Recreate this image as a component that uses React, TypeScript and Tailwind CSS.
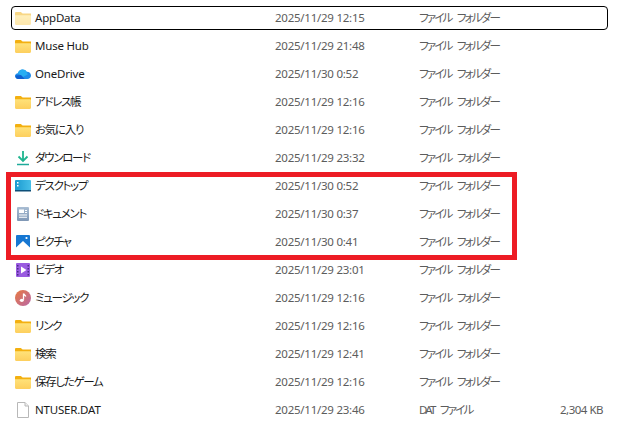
import React from "react";

const Folder = ({ faded }: { faded?: boolean }) => (
  <svg width="16" height="16" viewBox="0 0 16 16" className={faded ? "opacity-50" : ""}>
    <path d="M0 3.200C0 2.500.5 2 1.200 2h4.200c.4 0 .7.1 1 .4L7.600 3.500H16v3H0z" fill="#f3b010" />
    <path d="M0 5.200h14.800c.7 0 1.200.5 1.200 1.200v7.400c0 .7-.5 1.200-1.200 1.200H1.200C.5 15 0 14.500 0 13.800z" fill="url(#fg)" />
    <defs>
      <linearGradient id="fg" x1="0" y1="0" x2="0" y2="1">
        <stop offset="0" stopColor="#ffe27a" />
        <stop offset="1" stopColor="#fdcf5e" />
      </linearGradient>
    </defs>
  </svg>
);

const OneDrive = () => (
  <svg width="16" height="16" viewBox="0 0 16 16">
    <path d="M3.200 13C1.400 13 0 11.700 0 10.100c0-1.500 1.200-2.700 2.800-2.900C3.500 5 5.400 3.400 7.600 3.400c1.700 0 3.200.9 4 2.300 2.500-.2 4.400 1.600 4.400 3.700 0 2-1.600 3.600-3.700 3.600z" fill="#1f8be8" />
    <path d="M2.800 7.200 8 11l5-2.700c-1-1.400-1.300-1.500-1.400-2.600-.8-1.400-2.300-2.300-4-2.300-2.200 0-4.100 1.600-4.800 3.800z" fill="#27aef2" />
    <path d="M3.200 13h6.500L6 9 .6 9.400C.2 11 1.400 13 3.200 13z" fill="#0f5fd0" />
  </svg>
);

const Download = () => (
  <svg width="16" height="16" viewBox="0 0 16 16" fill="none">
    <path d="M8 1v10M3.500 6.500 8 11l4.500-4.500" stroke="#1fb58f" strokeWidth="1.800" />
    <path d="M2 14.500h12" stroke="#1faa9a" strokeWidth="1.500" />
  </svg>
);

const Desktop = () => (
  <svg width="16" height="16" viewBox="0 0 16 16">
    <defs>
      <linearGradient id="dg" x1="0" y1="0" x2="1" y2="0">
        <stop offset="0" stopColor="#1b9ad0" />
        <stop offset="1" stopColor="#47bfe8" />
      </linearGradient>
    </defs>
    <rect x="0" y="2" width="16" height="11" rx="1" fill="url(#dg)" />
    <rect x="0" y="12" width="16" height="1.500" fill="#0d4f78" />
    <rect x="2" y="4" width="1.500" height="1.500" fill="#fff" />
    <rect x="2" y="7" width="1.500" height="1.500" fill="#fff" />
  </svg>
);

const Doc = () => (
  <svg width="16" height="16" viewBox="0 0 16 16">
    <defs>
      <linearGradient id="docg" x1="0" y1="0" x2="0" y2="1">
        <stop offset="0" stopColor="#a9bdd3" />
        <stop offset="1" stopColor="#7f97b5" />
      </linearGradient>
    </defs>
    <rect x="2" y="1" width="12" height="14" rx="1" fill="url(#docg)" />
    <path d="M4 3.500h5v3.500H4zM10 4h2v1h-2zM10 6h2v1h-2zM4 8.500h8v1H4zM4 10.800h8v1H4z" fill="#fff" />
  </svg>
);

const Picture = () => (
  <svg width="16" height="16" viewBox="0 0 16 16">
    <rect x="1" y="1" width="14" height="14" rx="1" fill="#1677d2" />
    <path d="M1 15v-1.500L8 7l7 6.500V15z" fill="#fff" />
    <circle cx="11.500" cy="4" r="1.100" fill="#fff" />
  </svg>
);

const Video = () => (
  <svg width="16" height="16" viewBox="0 0 16 16">
    <rect x="1" y="1" width="14" height="14" rx="1" fill="#9a5be0" />
    <path d="M6 4.500v7l5.500-3.500z" fill="#fff" />
    <path d="M2 3h1.500v1.500H2zM2 6h1.500v1.500H2zM2 9h1.500v1.500H2zM2 12h1.500v1.500H2zM12.500 3H14v1.500h-1.500zM12.500 6H14v1.500h-1.500zM12.500 9H14v1.500h-1.500zM12.500 12H14v1.500h-1.500z" fill="#4a2a88" />
  </svg>
);

const Music = () => (
  <svg width="16" height="16" viewBox="0 0 16 16">
    <defs>
      <linearGradient id="mg" x1="0" y1="0" x2="1" y2="1">
        <stop offset="0" stopColor="#e8793f" />
        <stop offset="1" stopColor="#b968a8" />
      </linearGradient>
    </defs>
    <circle cx="8" cy="8" r="8" fill="url(#mg)" />
    <path d="M8.500 3.500v6.200M8.500 3.500c.3 1.500 2 1.700 2.300 3" stroke="#fff" strokeWidth="1.300" fill="none" />
    <ellipse cx="6.800" cy="10.300" rx="2" ry="1.600" fill="#fff" />
  </svg>
);

const FileIcon = () => (
  <svg width="16" height="16" viewBox="0 0 16 16" fill="#fff">
    <path d="M2.500.5h7.500l3.500 3.500v11.500h-11z" stroke="#b8b8b8" />
    <path d="M10 .5V4h3.500" stroke="#b8b8b8" fill="#f0f0f0" />
  </svg>
);

type Row = { icon: React.ReactNode; name: string; jp?: boolean; date: string; type: string; size?: string; selected?: boolean };

const T = "ファイル フォルダー";
const rows: Row[] = [
  { icon: <Folder faded />, name: "AppData", date: "2025/11/29 12:15", type: T, selected: true },
  { icon: <Folder />, name: "Muse Hub", date: "2025/11/29 21:48", type: T },
  { icon: <OneDrive />, name: "OneDrive", date: "2025/11/30 0:52", type: T },
  { icon: <Folder />, name: "アドレス帳", jp: true, date: "2025/11/29 12:16", type: T },
  { icon: <Folder />, name: "お気に入り", jp: true, date: "2025/11/29 12:16", type: T },
  { icon: <Download />, name: "ダウンロード", jp: true, date: "2025/11/29 23:32", type: T },
  { icon: <Desktop />, name: "デスクトップ", jp: true, date: "2025/11/30 0:52", type: T },
  { icon: <Doc />, name: "ドキュメント", jp: true, date: "2025/11/30 0:37", type: T },
  { icon: <Picture />, name: "ピクチャ", jp: true, date: "2025/11/30 0:41", type: T },
  { icon: <Video />, name: "ビデオ", jp: true, date: "2025/11/29 23:01", type: T },
  { icon: <Music />, name: "ミュージック", jp: true, date: "2025/11/29 12:16", type: T },
  { icon: <Folder />, name: "リンク", jp: true, date: "2025/11/29 12:16", type: T },
  { icon: <Folder />, name: "検索", jp: true, date: "2025/11/29 12:41", type: T },
  { icon: <Folder />, name: "保存したゲーム", jp: true, date: "2025/11/29 12:16", type: T },
  { icon: <FileIcon />, name: "NTUSER.DAT", date: "2025/11/29 23:46", type: "DAT ファイル", size: "2,304 KB" },
];

export default function App() {
  return (
    <div className="relative flex flex-col gap-1 w-[632px] h-[437px] bg-white overflow-hidden pt-[6px] pl-[11px] text-[11.5px] [font-feature-settings:'palt'] font-['Noto_Sans','Noto_Sans_CJK_JP',sans-serif]">
      {rows.map((r) => (
        <div
          key={r.name}
          className={`flex items-center w-[597px] h-6 shrink-0 pl-1 pr-1 rounded-sm border ${
            r.selected ? "border-black" : "border-transparent"
          }`}
        >
          <div className="w-4 h-4 -ml-px shrink-0">{r.icon}</div>
          <div className={`w-[244px] pl-1 shrink-0 text-[#1a1a1a] truncate ${r.jp ? "tracking-[-1.3px]" : "tracking-[-0.2px]"}`}>{r.name}</div>
          <div className="w-[144px] shrink-0 text-[#5c5c5c] tracking-[-0.25px]">{r.date}</div>
          <div className="w-[130px] shrink-0 text-[#5c5c5c] tracking-[-1.8px] [word-spacing:4px]">{r.type}</div>
          <div className="flex-1 text-right text-[#5c5c5c] tracking-[-0.5px]">{r.size}</div>
        </div>
      ))}
      <div className="absolute left-[6px] top-[172px] w-[511px] h-[88px] border-[5px] border-[#ed1c24]" />
    </div>
  );
}
